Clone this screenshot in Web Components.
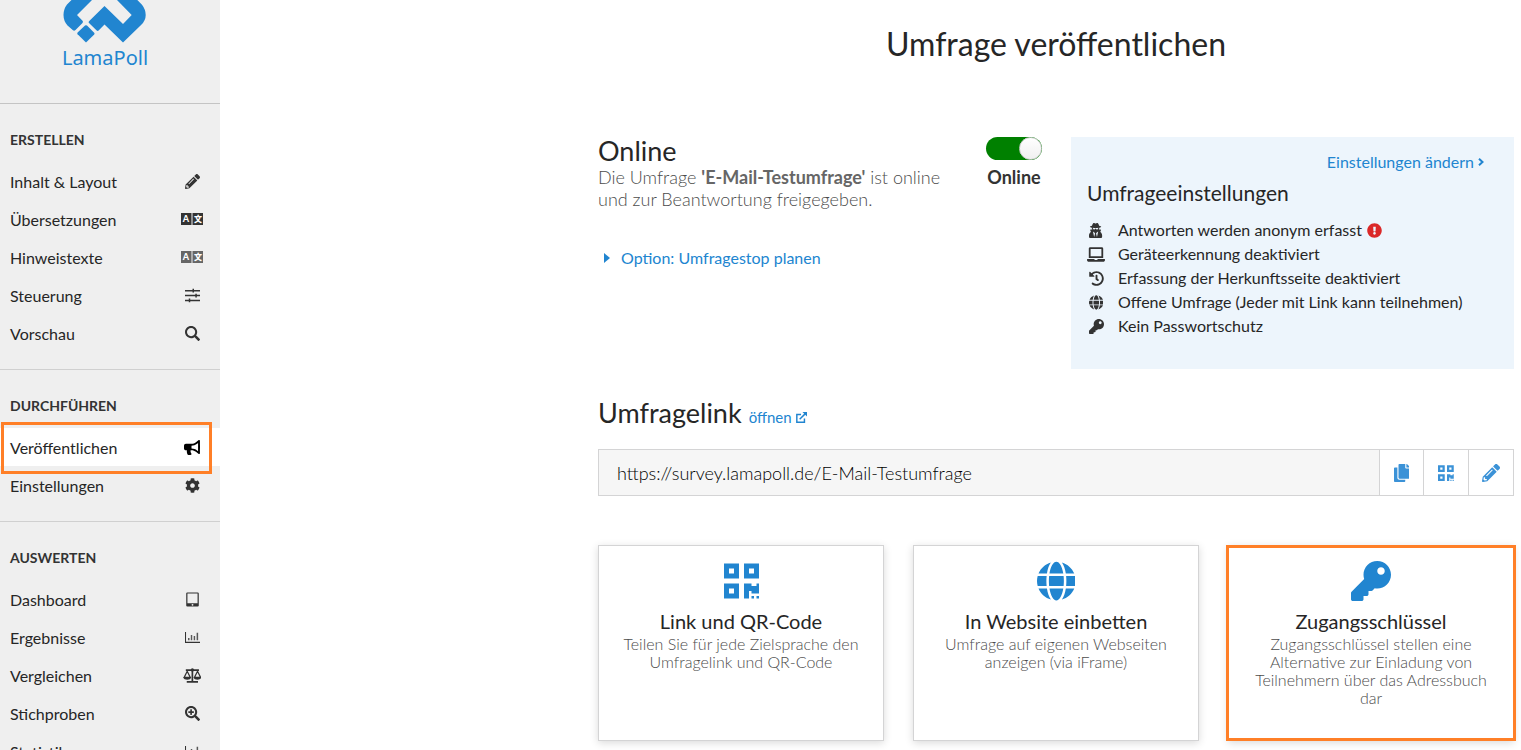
<!DOCTYPE html>
<html lang="de">
<head>
  <meta charset="utf-8">
  <title>Umfrage veröffentlichen</title>
  <style>
    html, body {
      margin: 0;
      height: 100%;
      overflow: hidden;
    }
    body {
      font-family: Lato, "Open Sans", sans-serif;
      font-size: 16px;
      color: #262626;
      background: #fff;
      --blue: #2185d0;
      --orange: #ff7f27;
      --line: #d4d4d5;
      --muted: #4c4c4c;
    }
  </style>
</head>
<body>
<poll-app></poll-app>

<script>
  const FA = {
    pencil: ['0 0 512 512', '<path d="M497.9 142.1l-46.1 46.1c-4.7 4.7-12.3 4.7-17 0l-111-111c-4.7-4.7-4.7-12.3 0-17l46.1-46.1c18.7-18.7 49.1-18.7 67.9 0l60.1 60.1c18.8 18.7 18.8 49.1 0 67.9zM284.2 99.8L21.6 362.4.4 483.9c-2.9 16.4 11.4 30.6 27.8 27.8l121.5-21.3 262.6-262.6c4.7-4.7 4.7-12.3 0-17l-111-111c-4.8-4.7-12.4-4.7-17.1 0zM124.1 339.9c-5.5-5.5-5.5-14.3 0-19.8l154-154c5.5-5.5 14.3-5.5 19.8 0s5.5 14.3 0 19.8l-154 154c-5.5 5.5-14.3 5.5-19.8 0zM88 424h48v36.3l-64.5 11.3-31.1-31.1L51.7 376H88v48z"/>'],
    language: ['0 0 24 14', '<path d="M1 1h10.500v12H1zM12.500 1H23v12H12.500z"/><g fill="#fff" font-family="Lato, \'Noto Sans CJK SC\', sans-serif" font-weight="900" text-anchor="middle"><text x="6" y="10" font-size="9">A</text><text x="18" y="10" font-size="8" font-family="\'Noto Sans CJK SC\', sans-serif">文</text></g>'],
    sliders: ['0 0 16 16', '<path d="M0 2h16v1.600H0zM0 7.200h16v1.600H0zM0 12.400h16V14H0zM8 .8h1.600v4H8zM11 6h1.600v4H11zM4 11.200h1.600v4H4z"/>'],
    search: ['0 0 512 512', '<path d="M505 442.700L405.300 343c-4.500-4.500-10.600-7-17-7H372c27.600-35.300 44-79.700 44-128C416 93.100 322.900 0 208 0S0 93.100 0 208s93.100 208 208 208c48.300 0 92.700-16.400 128-44v16.300c0 6.400 2.500 12.500 7 17l99.700 99.700c9.400 9.400 24.600 9.400 33.900 0l28.300-28.300c9.400-9.400 9.400-24.600.1-34zM208 348c-77 0-140-63-140-140S131 68 208 68s140 63 140 140-63 140-140 140z"/>'],
    searchPlus: ['0 0 512 512', '<path d="M505 442.700L405.300 343c-4.500-4.500-10.600-7-17-7H372c27.600-35.300 44-79.700 44-128C416 93.100 322.900 0 208 0S0 93.100 0 208s93.100 208 208 208c48.300 0 92.700-16.400 128-44v16.300c0 6.400 2.500 12.500 7 17l99.700 99.700c9.400 9.400 24.600 9.400 33.900 0l28.300-28.300c9.400-9.400 9.400-24.600.1-34zM208 348c-77 0-140-63-140-140S131 68 208 68s140 63 140 140-63 140-140 140z"/><path d="M304 192v32c0 6.600-5.400 12-12 12h-56v56c0 6.600-5.400 12-12 12h-32c-6.600 0-12-5.400-12-12v-56h-56c-6.600 0-12-5.400-12-12v-32c0-6.600 5.400-12 12-12h56v-56c0-6.600 5.400-12 12-12h32c6.600 0 12 5.400 12 12v56h56c6.600 0 12 5.400 12 12z"/>'],
    bullhorn: ['0 0 576 512', '<path d="M576 240c0-23.630-12.950-44.040-32-55.120V32.010C544 23.260 537.020 0 512 0c-7.120 0-14.190 2.380-19.980 7.020l-85.030 68.030C364.280 109.190 310.660 128 256 128H64c-35.350 0-64 28.650-64 64v96c0 35.350 28.650 64 64 64h33.700c-1.390 10.480-2.180 21.140-2.180 32 0 39.770 9.260 77.350 25.560 110.940 5.190 10.690 16.520 17.060 28.400 17.060h74.280c26.050 0 41.690-29.840 25.900-50.560-16.400-21.520-26.150-48.360-26.150-77.440 0-11.110 1.620-21.790 4.410-32H256c54.660 0 108.280 18.810 150.980 52.950l85.030 68.030a32.023 32.023 0 0 0 19.980 7.020c24.920 0 32-22.780 32-32V295.130C563.050 284.040 576 263.630 576 240zm-96 141.420l-33.050-26.440C392.950 311.780 325.120 288 256 288v-96c69.120 0 136.950-23.780 190.950-66.980L480 98.580v282.840z"/>'],
    cog: ['0 0 512 512', '<path d="M487.4 315.7l-42.6-24.6c4.3-23.2 4.3-47 0-70.2l42.6-24.6c4.9-2.8 7.1-8.6 5.5-14-11.1-35.6-30-67.8-54.7-94.6-3.8-4.1-10-5.1-14.8-2.3L380.8 110c-17.9-15.4-38.5-27.3-60.8-35.1V25.8c0-5.6-3.9-10.5-9.4-11.7-36.7-8.2-74.3-7.8-109.2 0-5.5 1.2-9.4 6.1-9.4 11.7V75c-22.2 7.9-42.8 19.8-60.8 35.1L88.7 85.5c-4.9-2.8-11-1.9-14.8 2.3-24.7 26.7-43.6 58.9-54.7 94.6-1.7 5.4.6 11.2 5.5 14L67.3 221c-4.3 23.2-4.3 47 0 70.2l-42.6 24.6c-4.9 2.8-7.1 8.6-5.5 14 11.1 35.6 30 67.8 54.7 94.6 3.8 4.1 10 5.1 14.8 2.3l42.6-24.6c17.9 15.4 38.5 27.3 60.8 35.1v49.2c0 5.6 3.9 10.5 9.4 11.7 36.7 8.2 74.3 7.8 109.2 0 5.500-1.200 9.400-6.100 9.400-11.700v-49.200c22.200-7.900 42.800-19.800 60.800-35.100l42.600 24.600c4.900 2.800 11 1.900 14.800-2.300 24.700-26.700 43.600-58.900 54.700-94.600 1.500-5.500-.7-11.300-5.600-14.100zM256 336c-44.100 0-80-35.900-80-80s35.900-80 80-80 80 35.900 80 80-35.900 80-80 80z"/>'],
    tablet: ['0 0 16 16', '<path fill-rule="evenodd" d="M2.500.500h11a1.200 1.200 0 0 1 1.200 1.200v12.600a1.200 1.200 0 0 1-1.200 1.200h-11a1.200 1.200 0 0 1-1.200-1.200V1.700A1.200 1.200 0 0 1 2.500.500zM2.600 1.700v10.200h10.800V1.700zM8 12.700a1 1 0 1 0 0 2 1 1 0 0 0 0-2z"/>'],
    chart: ['0 0 16 16', '<path d="M0 2h1.100v10.600H16v1.200H0z"/><path opacity=".8" d="M3.200 8.500h1.600V11H3.200zM6.200 5.200h1.500V11H6.200zM9.300 6.500h1.500V11H9.300zM12.400 3H14v8h-1.600z"/>'],
    balance: ['0 0 20 16', '<g fill="none" stroke="currentColor" stroke-width="1.800"><path d="M3 2.200h14M10 2v12.500M4 14.800h12"/><path d="M4.500 3.500L1.200 10h6.600zM15.500 3.500L12.200 10h6.600z" stroke-width="1.300"/></g><path d="M.5 10h8c0 3.200-8 3.200-8 0zM11.500 10h8c0 3.200-8 3.200-8 0zM8.200 2a1.800 1.800 0 1 0 3.600 0 1.800 1.800 0 0 0-3.600 0z"/>'],
    secret: ['0 0 448 512', '<path d="M383.900 308.300l23.900-62.600c4-10.500-3.700-21.700-15-21.700h-58.500c11-18.900 17.800-40.600 17.800-64v-.3c39.200-7.800 64-19.100 64-31.700 0-13.300-27.300-25.100-70.100-33-9.200-32.800-27-65.800-40.600-82.800-9.500-11.900-25.900-15.600-39.500-8.800l-27.600 13.800c-9 4.500-19.600 4.500-28.600 0L182.100 3.400c-13.600-6.800-30-3.100-39.500 8.800-13.500 17-31.400 50-40.600 82.800-42.700 7.900-70 19.700-70 33 0 12.600 24.800 23.900 64 31.700v.3c0 23.400 6.800 45.100 17.800 64H56.300c-11.500 0-19.200 11.700-14.700 22.300l25.800 60.200C27.300 329.800 0 372.700 0 422.400v44.800C0 491.900 20.100 512 44.800 512h358.400c24.700 0 44.800-20.100 44.800-44.800v-44.800c0-48.400-25.800-90.400-64.100-114.100zM176 480l-41.600-192 49.600 32 24 40-32 120zm96 0l-32-120 24-40 49.600-32L272 480zm41.700-298.500c-3.900 11.900-7 24.600-16.500 33.400-10.100 9.300-48 22.400-64-25-2.800-8.400-15.400-8.400-18.300 0-17 50.200-56 32.400-64 25-9.500-8.800-12.700-21.500-16.500-33.400-.8-2.500-6.300-5.700-6.300-5.800v-10.800c28.300 3.600 61 5.800 96 5.800s67.700-2.100 96-5.800v10.800c-.1.100-5.600 3.200-6.400 5.800z"/>'],
    laptop: ['0 0 640 512', '<path d="M624 416H381.540c-.74 19.810-14.710 32-32.740 32H288c-18.690 0-33.020-17.470-32.770-32H16c-8.800 0-16 7.200-16 16v16c0 35.200 28.800 64 64 64h512c35.200 0 64-28.800 64-64v-16c0-8.800-7.200-16-16-16zM576 48c0-26.400-21.600-48-48-48H112C85.600 0 64 21.600 64 48v336h512V48zm-64 272H128V64h384v256z"/>'],
    history: ['0 0 512 512', '<path d="M504 255.531c.253 136.640-111.180 248.372-247.820 248.468-59.015.042-113.223-20.530-155.822-54.911-11.077-8.940-11.905-25.541-1.839-35.607l11.267-11.267c8.609-8.609 22.353-9.551 31.891-1.984C173.062 425.135 212.781 440 256 440c101.705 0 184-82.311 184-184 0-101.705-82.311-184-184-184-48.814 0-93.149 18.969-126.068 49.932l50.754 50.754c10.080 10.080 2.941 27.314-11.313 27.314H24c-8.837 0-16-7.163-16-16V38.627c0-14.254 17.234-21.393 27.314-11.314l49.372 49.372C129.209 34.136 189.552 8 256 8c136.810 0 247.747 110.780 248 247.531zm-180.912 78.784l9.823-12.630c8.138-10.463 6.253-25.542-4.210-33.679L288 256.349V152c0-13.255-10.745-24-24-24h-16c-13.255 0-24 10.745-24 24v135.651l65.409 50.874c10.463 8.137 25.541 6.253 33.679-4.210z"/>'],
    globe: ['0 0 496 512', '<path d="M336.500 160C322 70.700 287.800 8 248 8s-74 62.700-88.500 152h177zM152 256c0 22.200 1.200 43.500 3.300 64h185.300c2.100-20.500 3.300-41.800 3.300-64s-1.200-43.500-3.300-64H155.300c-2.100 20.500-3.300 41.800-3.300 64zm324.700-96c-28.600-67.900-86.500-120.400-158-141.600 24.400 33.800 41.200 84.700 50 141.600h108zM177.200 18.400C105.800 39.600 47.800 92.100 19.300 160h108c8.700-56.900 25.500-107.800 49.900-141.600zM487.400 192H372.700c2.100 21 3.300 42.500 3.300 64s-1.200 43-3.300 64h114.600c5.500-20.500 8.600-41.800 8.600-64s-3.100-43.500-8.500-64zM120 256c0-21.500 1.200-43 3.300-64H8.600C3.200 212.500 0 233.800 0 256s3.200 43.500 8.600 64h114.600c-2-21-3.200-42.500-3.200-64zm39.500 96c14.500 89.300 48.700 152 88.500 152s74-62.700 88.500-152h-177zm159.300 141.600c71.400-21.200 129.400-73.700 158-141.600h-108c-8.800 56.900-25.600 107.800-50 141.600zM19.300 352c28.600 67.900 86.500 120.400 158 141.600-24.400-33.800-41.200-84.700-50-141.600h-108z"/>'],
    key: ['0 0 512 512', '<path d="M512 176.001C512 273.203 433.202 352 336 352c-11.220 0-22.190-1.062-32.827-3.069l-24.012 27.014A23.999 23.999 0 0 1 261.223 384H224v40c0 13.255-10.745 24-24 24h-40v40c0 13.255-10.745 24-24 24H24c-13.255 0-24-10.745-24-24v-78.059c0-6.365 2.529-12.470 7.029-16.971l161.802-161.802C163.108 213.814 160 195.271 160 176 160 78.798 238.797.001 335.999 0 433.488-.001 512 78.511 512 176.001zM336 128c0 26.510 21.490 48 48 48s48-21.490 48-48-21.490-48-48-48-48 21.490-48 48z"/>'],
    alert: ['0 0 512 512', '<path d="M504 256c0 136.997-111.043 248-248 248S8 392.997 8 256C8 119.083 119.043 8 256 8s248 111.083 248 248zm-248 50c-25.405 0-46 20.595-46 46s20.595 46 46 46 46-20.595 46-46-20.595-46-46-46zm-43.673-165.346l7.418 136c.347 6.364 5.609 11.346 11.982 11.346h48.546c6.373 0 11.635-4.982 11.982-11.346l7.418-136c.375-6.874-5.098-12.654-11.982-12.654h-63.383c-6.884 0-12.356 5.780-11.981 12.654z"/>'],
    copy: ['0 0 448 512', '<path d="M320 448v40c0 13.255-10.745 24-24 24H24c-13.255 0-24-10.745-24-24V120c0-13.255 10.745-24 24-24h72v296c0 30.879 25.121 56 56 56h168zm0-344V0H152c-13.255 0-24 10.745-24 24v368c0 13.255 10.745 24 24 24h272c13.255 0 24-10.745 24-24V128H344c-13.200 0-24-10.800-24-24zm120.971-31.029L375.029 7.029A24 24 0 0 0 358.059 0H352v96h96v-6.059a24 24 0 0 0-7.029-16.970z"/>'],
    qrcode: ['0 0 448 512', '<path d="M0 224h192V32H0v192zM64 96h64v64H64V96zm192-64v192h192V32H256zm128 128h-64V96h64v64zM0 480h192V288H0v192zm64-128h64v64H64v-64zm352-64h32v128h-96v-32h-32v96h-64V288h96v32h64v-32zm0 160h32v32h-32v-32zm-64 0h32v32h-32v-32z"/>'],
    external: ['0 0 12 12', '<g fill="none" stroke="currentColor" stroke-width="1.600"><path d="M5.500 2.800H.9v8.300h8.300V7M4 8l6.500-6.500"/></g><path d="M7 0h5v5z"/>'],
    caret: ['0 0 6 10', '<path d="M0 0l6 5-6 5z"/>'],
    chevron: ['0 0 6 8', '<path d="M1 .8L4.500 4 1 7.200" fill="none" stroke="currentColor" stroke-width="2"/>']
  };

  // <fa-icon name="key"> takes its height from --size
  class FaIcon extends HTMLElement {
    connectedCallback() {
      const [box, shape] = FA[this.getAttribute('name')];
      this.attachShadow({ mode: 'open' });
      this.shadowRoot.innerHTML = `
        <style>
          :host { display: inline-flex; justify-content: center; align-items: center; }
          svg { display: block; height: var(--size, 16px); fill: currentColor; }
        </style>
        <svg viewBox="${box}" aria-hidden="true">${shape}</svg>
      `;
    }
  }
  customElements.define('fa-icon', FaIcon);

  class PollLogo extends HTMLElement {
    connectedCallback() {
      this.attachShadow({ mode: 'open' });
      this.shadowRoot.innerHTML = `
        <style>
          :host {
            display: block;
            box-sizing: border-box;
            height: 104px;
            border-bottom: 1px solid #c4c4c4;
          }
          a {
            display: flex;
            flex-direction: column;
            align-items: center;
            width: 210px;
            color: var(--blue);
            text-decoration: none;
            font: 20px/30px "Noto Sans", sans-serif;
          }
          svg { display: block; fill: currentColor; }
        </style>
        <a href="#start">
          <svg width="84" height="43" viewBox="63 0 84 43" aria-hidden="true">
            <path d="M71.500 0L67 4.500Q63.500 9 63.500 15t4 10.500L73 30.300q1.300.8 2.500-.3l7-7q1-1.200 0-2.300L77 15 92 0z"/>
            <path d="M85 25.600q1-.9 2 0l7.200 7.100q.8 1 0 1.900L86 42.500l-8.400-8.200q-.8-1 0-1.800z"/>
            <path d="M104.500 6L89 21.200q-.9.900 0 1.800l7.700 7.500q.9.800 1.900 0l5.900-6 18.500 18 18.300-17.700Q145.700 20.500 145.700 15T142 4.700L137.300 0H117l14.700 15-8.700 9z"/>
          </svg>
          LamaPoll
        </a>
      `;
    }
  }
  customElements.define('poll-logo', PollLogo);

  class MenuSection extends HTMLElement {
    connectedCallback() {
      this.attachShadow({ mode: 'open' });
      this.shadowRoot.innerHTML = `
        <style>
          :host {
            display: block;
            padding: 26px 0 17px;
            border-bottom: 1px solid #d0d0d0;
          }
          h2 {
            margin: 0 10px 12px;
            font-size: 14px;
            line-height: 20px;
            font-weight: 700;
            color: #333;
          }
        </style>
        <h2>${this.getAttribute('heading')}</h2>
        <slot></slot>
      `;
    }
  }
  customElements.define('menu-section', MenuSection);

  class MenuItem extends HTMLElement {
    connectedCallback() {
      this.attachShadow({ mode: 'open' });
      this.shadowRoot.innerHTML = `
        <style>
          :host { display: block; position: relative; }
          a {
            display: flex;
            align-items: center;
            justify-content: space-between;
            height: 38px;
            padding: 0 16px 0 10px;
            color: #262626;
            text-decoration: none;
          }
          fa-icon { width: 24px; --size: 15px; color: #333; }
          fa-icon[name="language"] { --size: 14px; }
          :host([muted]) fa-icon { color: #666; }
          :host([active]) a { background: #fff; }
          :host([active]) fa-icon { color: #000; }
          :host([active])::after {
            content: "";
            position: absolute;
            inset: -6px 8px -8px 1px;
            border: 3px solid var(--orange);
            pointer-events: none;
          }
        </style>
        <a href="#"><slot></slot><fa-icon name="${this.getAttribute('icon')}"></fa-icon></a>
      `;
    }
  }
  customElements.define('menu-item', MenuItem);

  class PollToggle extends HTMLElement {
    connectedCallback() {
      this.attachShadow({ mode: 'open' });
      this.shadowRoot.innerHTML = `
        <style>
          :host { display: block; }
          label {
            display: flex;
            flex-direction: column;
            align-items: center;
            gap: 6px;
            font-size: 18px;
            line-height: 22px;
            font-weight: 700;
            color: #333;
          }
          input {
            appearance: none;
            display: flex;
            justify-content: flex-end;
            width: 56px;
            height: 23px;
            margin: 0;
            border-radius: 12px;
            background: green;
          }
          input::before {
            content: "";
            box-sizing: border-box;
            width: 23px;
            height: 23px;
            border: 1px solid #ccc;
            border-radius: 50%;
            background: linear-gradient(#fff, #f0f0f0);
          }
          input:not(:checked) { justify-content: flex-start; background: #ccc; }
        </style>
        <label><input type="checkbox" checked><slot></slot></label>
      `;
    }
  }
  customElements.define('poll-toggle', PollToggle);

  class SettingsPanel extends HTMLElement {
    connectedCallback() {
      this.attachShadow({ mode: 'open' });
      this.shadowRoot.innerHTML = `
        <style>
          :host {
            display: block;
            box-sizing: border-box;
            padding: 14px 30px 30px 16px;
            background: #edf5fc;
          }
          .change {
            display: flex;
            justify-content: flex-end;
            align-items: center;
            gap: 4px;
            line-height: 22px;
            color: var(--blue);
            text-decoration: none;
            --size: 8px;
          }
          h3 {
            margin: 6px 0 11px;
            font-size: 21px;
            line-height: 28px;
            font-weight: 400;
          }
          ul { margin: 0; padding: 0; list-style: none; }
        </style>
        <a class="change" href="#">Einstellungen ändern <fa-icon name="chevron"></fa-icon></a>
        <h3>Umfrageeinstellungen</h3>
        <ul><slot></slot></ul>
      `;
    }
  }
  customElements.define('settings-panel', SettingsPanel);

  class SettingsRow extends HTMLElement {
    connectedCallback() {
      this.setAttribute('role', 'listitem');
      this.attachShadow({ mode: 'open' });
      this.shadowRoot.innerHTML = `
        <style>
          :host {
            display: flex;
            align-items: center;
            gap: 5px;
            line-height: 24px;
            --size: 15px;
          }
          .lead { width: 18px; margin-right: 8px; color: #333; }
          .alert { color: #db2828; }
        </style>
        <fa-icon class="lead" name="${this.getAttribute('icon')}"></fa-icon>
        <slot></slot>
        ${this.hasAttribute('alert') ? '<fa-icon class="alert" name="alert"></fa-icon>' : ''}
      `;
    }
  }
  customElements.define('settings-row', SettingsRow);

  class PollStatus extends HTMLElement {
    connectedCallback() {
      this.attachShadow({ mode: 'open' });
      this.shadowRoot.innerHTML = `
        <style>
          :host { display: flex; gap: 28px; }
          .text { flex: 1; min-width: 0; }
          h2 { margin: 0; font-size: 27px; line-height: 28px; font-weight: 400; }
          p {
            margin: 1px 0 37px;
            font-size: 18px;
            line-height: 22px;
            font-weight: 300;
            color: var(--muted);
          }
          b { font-weight: 700; color: #666; }
          a {
            display: flex;
            align-items: center;
            gap: 11px;
            margin-left: 6px;
            line-height: 22px;
            color: var(--blue);
            text-decoration: none;
            --size: 10px;
          }
          poll-toggle { width: 58px; }
          settings-panel { width: 443px; min-height: 232px; }
        </style>
        <div class="text">
          <h2>Online</h2>
          <p>Die Umfrage <b>'E-Mail-Testumfrage'</b> ist online und zur Beantwortung freigegeben.</p>
          <a href="#"><fa-icon name="caret"></fa-icon>Option: Umfragestop planen</a>
        </div>
        <poll-toggle>Online</poll-toggle>
        <settings-panel>
          <settings-row icon="secret" alert>Antworten werden anonym erfasst</settings-row>
          <settings-row icon="laptop">Geräteerkennung deaktiviert</settings-row>
          <settings-row icon="history">Erfassung der Herkunftsseite deaktiviert</settings-row>
          <settings-row icon="globe">Offene Umfrage (Jeder mit Link kann teilnehmen)</settings-row>
          <settings-row icon="key">Kein Passwortschutz</settings-row>
        </settings-panel>
      `;
    }
  }
  customElements.define('poll-status', PollStatus);

  class SurveyLink extends HTMLElement {
    connectedCallback() {
      this.attachShadow({ mode: 'open' });
      this.shadowRoot.innerHTML = `
        <style>
          :host { display: block; }
          header { display: flex; align-items: baseline; gap: 7px; margin-bottom: 20px; }
          h2 { margin: 0; font-size: 27px; line-height: 32px; font-weight: 400; }
          a {
            display: flex;
            align-items: center;
            gap: 4px;
            font-size: 15px;
            color: var(--blue);
            text-decoration: none;
            --size: 11px;
          }
          .bar { display: flex; height: 47px; }
          input {
            flex: 1;
            min-width: 0;
            box-sizing: border-box;
            padding: 0 18px;
            border: 1px solid var(--line);
            border-right: 0;
            background: #f6f6f6;
            font: inherit;
            font-size: 18px;
            font-weight: 300;
            color: #000;
            outline: none;
          }
          button {
            width: 45px;
            box-sizing: border-box;
            padding: 0;
            border: 1px solid var(--line);
            background: #fff;
            color: #3b92d7;
            --size: 18px;
          }
          button + button { border-left: 0; }
          button fa-icon { display: flex; }
        </style>
        <header>
          <h2><label for="url">Umfragelink</label></h2>
          <a href="#">öffnen <fa-icon name="external"></fa-icon></a>
        </header>
        <div class="bar">
          <input id="url" type="text" readonly value="https://survey.lamapoll.de/E-Mail-Testumfrage">
          <button type="button" aria-label="Kopieren"><fa-icon name="copy"></fa-icon></button>
          <button type="button" aria-label="QR-Code"><fa-icon name="qrcode"></fa-icon></button>
          <button type="button" aria-label="Bearbeiten"><fa-icon name="pencil"></fa-icon></button>
        </div>
      `;
    }
  }
  customElements.define('survey-link', SurveyLink);

  class OptionCard extends HTMLElement {
    connectedCallback() {
      this.attachShadow({ mode: 'open' });
      this.shadowRoot.innerHTML = `
        <style>
          :host { display: block; position: relative; }
          a {
            display: block;
            box-sizing: border-box;
            min-height: 196px;
            padding: 15px 22px 20px;
            border: 1px solid var(--line);
            background: #fff;
            box-shadow: 0 2px 8px rgba(0, 0, 0, 0.15);
            color: #262626;
            text-align: center;
            text-decoration: none;
          }
          fa-icon { display: flex; color: var(--blue); --size: 40px; }
          h3 { margin: 7px 0 0; font-size: 20px; line-height: 26px; font-weight: 400; }
          p {
            margin: 1px 0 0;
            font-size: 16px;
            line-height: 18px;
            font-weight: 300;
            color: var(--muted);
          }
          :host([marked])::after {
            content: "";
            position: absolute;
            inset: 0 -2px;
            border: 3px solid var(--orange);
            pointer-events: none;
          }
        </style>
        <a href="#">
          <fa-icon name="${this.getAttribute('icon')}"></fa-icon>
          <h3>${this.getAttribute('heading')}</h3>
          <p><slot></slot></p>
        </a>
      `;
    }
  }
  customElements.define('option-card', OptionCard);

  class PollApp extends HTMLElement {
    connectedCallback() {
      this.attachShadow({ mode: 'open' });
      this.shadowRoot.innerHTML = `
        <style>
          :host { display: grid; grid-template-columns: 220px 1fr; height: 100vh; overflow: hidden; }
          nav { background: #efefef; overflow: hidden; }
          main { padding: 0 7px 9px; }
          .content { max-width: 916px; margin-left: auto; }
          h1 {
            margin: 0 0 69px;
            padding-top: 20px;
            font-size: 32px;
            line-height: 48px;
            font-weight: 400;
            text-align: center;
          }
          survey-link { margin: 28px 0 49px; }
          .cards { display: grid; grid-template-columns: repeat(3, 1fr); gap: 29px; }
        </style>
        <nav>
          <poll-logo></poll-logo>
          <menu-section heading="ERSTELLEN">
            <menu-item icon="pencil">Inhalt &amp; Layout</menu-item>
            <menu-item icon="language">Übersetzungen</menu-item>
            <menu-item icon="language" muted>Hinweistexte</menu-item>
            <menu-item icon="sliders">Steuerung</menu-item>
            <menu-item icon="search">Vorschau</menu-item>
          </menu-section>
          <menu-section heading="DURCHFÜHREN">
            <menu-item icon="bullhorn" active>Veröffentlichen</menu-item>
            <menu-item icon="cog">Einstellungen</menu-item>
          </menu-section>
          <menu-section heading="AUSWERTEN">
            <menu-item icon="tablet">Dashboard</menu-item>
            <menu-item icon="chart">Ergebnisse</menu-item>
            <menu-item icon="balance">Vergleichen</menu-item>
            <menu-item icon="searchPlus">Stichproben</menu-item>
            <menu-item icon="chart">Statistik</menu-item>
          </menu-section>
        </nav>
        <main>
          <div class="content">
            <h1>Umfrage veröffentlichen</h1>
            <poll-status></poll-status>
            <survey-link></survey-link>
            <div class="cards">
              <option-card icon="qrcode" heading="Link und QR-Code">Teilen Sie für jede Zielsprache den Umfragelink und QR-Code</option-card>
              <option-card icon="globe" heading="In Website einbetten">Umfrage auf eigenen Webseiten anzeigen (via iFrame)</option-card>
              <option-card icon="key" heading="Zugangsschlüssel" marked>Zugangsschlüssel stellen eine Alternative zur Einladung von Teilnehmern über das Adressbuch dar</option-card>
            </div>
          </div>
        </main>
      `;
    }
  }
  customElements.define('poll-app', PollApp);
</script>
</body>
</html>
